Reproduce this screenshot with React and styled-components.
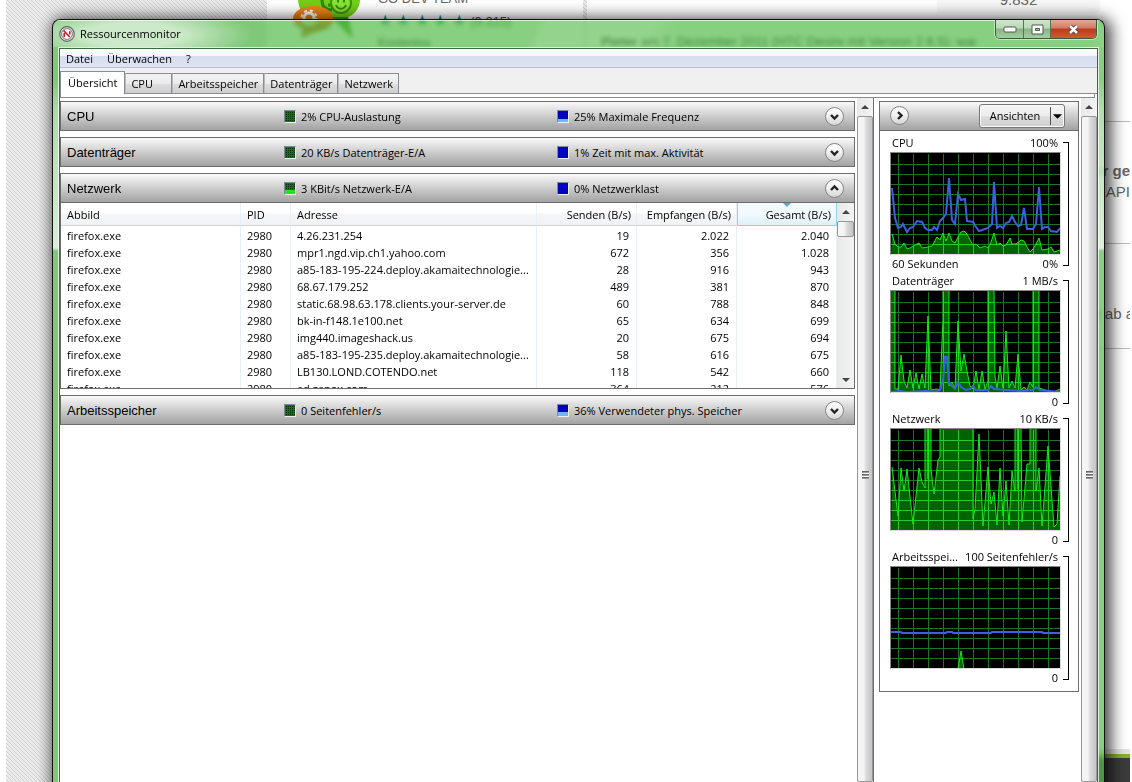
import { useState } from "react";
import styled, { createGlobalStyle } from "styled-components";

const GlobalStyle = createGlobalStyle`
  * {
    box-sizing: border-box;
  }
  body {
    margin: 0;
    background-color: #fff;
  }
  button {
    font: inherit;
    color: inherit;
    padding: 0;
    margin: 0;
  }
`;

const Desktop = styled.div`
  position: relative;
  height: 100vh;
  overflow: hidden;
  font-family: "Open Sans", "Noto Sans", sans-serif;
  font-size: 11px;
  line-height: 17px;
  color: #000;
`;

/* web page behind the window */

const WebPage = styled.div`
  display: flex;
  height: 100%;
  padding: 0 2px 0 6px;
  font-family: "Liberation Sans", Arial, sans-serif;
  font-size: 15px;
  color: #666;
  overflow: hidden;
  .hatch,
  .strip {
    background: linear-gradient(
        45deg,
        #cfcfcf 12.5%,
        #ededed 12.5% 50%,
        #cfcfcf 50% 62.5%,
        #ededed 62.5%
      )
      0 0 / 4px 4px;
  }
  .hatch {
    flex: none;
    width: 261px;
  }
  .sheet {
    flex: 1;
    min-width: 0;
    display: flex;
    flex-direction: column;
    overflow: hidden;
  }
  .top {
    flex: 1;
    display: flex;
    min-height: 0;
  }
  .strip {
    width: 4px;
    height: 250px;
  }
  .foot {
    flex: none;
    height: 28px;
    border-top: 4px solid #86b22d;
    background-color: #3c3c3c;
    outline: 5px solid #e4e4e4;
  }
`;

const AppInfo = styled.div`
  display: flex;
  gap: 18px;
  width: 316px;
  padding-left: 26px;
  svg {
    flex: none;
  }
  p {
    margin: 0;
    height: 22px;
    line-height: 22px;
    white-space: nowrap;
  }
  .dev {
    margin-top: -12px;
    font-size: 13px;
  }
  .stars {
    color: #178a8a;
    font-size: 16px;
    span {
      color: #444;
      font-size: 13px;
    }
  }
  .free {
    color: #222;
    font-size: 12px;
  }
`;

const Reviews = styled.div`
  flex: 1;
  min-width: 0;
  .count {
    width: 163px;
    height: 13px;
    margin-left: auto;
    margin-right: 30px;
    line-height: 0;
    text-align: center;
    font-size: 15px;
    background-color: #f7f7f7;
    border-radius: 0 0 4px 4px;
  }
  .author {
    height: 109px;
    margin: 0;
    padding: 20px 14px;
    border-bottom: 1px solid #bbb;
    font-size: 13px;
    color: #111;
  }
  .entry {
    height: 122px;
    padding-top: 38px;
    border-bottom: 1px solid #bbb;
    line-height: 21px;
    text-align: right;
    p {
      margin: 0;
    }
  }
  .entry.last {
    height: 105px;
    padding-top: 59px;
    margin-right: -4px;
  }
`;

/* window frame */

const Window = styled.div`
  position: absolute;
  top: 19px;
  left: 52px;
  right: 27px;
  bottom: 0;
  display: flex;
  flex-direction: column;
  border: 1px solid #111;
  border-bottom: none;
  border-radius: 8px 8px 0 0;
  padding: 0 5px;
  overflow: hidden;
  background-color: rgba(84, 188, 74, 0.7);
  backdrop-filter: blur(2px);
  background-image: linear-gradient(
    transparent 60px,
    rgba(255, 255, 255, 0.35) 90px,
    rgba(255, 255, 255, 0.7) 228px,
    transparent 231px
  );
`;

const WindowShadow = styled.div`
  position: absolute;
  top: 19px;
  left: 52px;
  right: 27px;
  bottom: -20px;
  border-radius: 8px;
  box-shadow: 3px 2px 16px 3px rgba(0, 0, 0, 0.75);
`;

const TitleBar = styled.header`
  display: flex;
  align-items: center;
  height: 27px;
  flex: none;
  margin: 0 -5px;
  padding: 0 7px 0 6px;
  box-shadow: inset 0 1px rgba(255, 255, 255, 0.7);
  background: radial-gradient(
      ellipse 120px 30px at 80px 15px,
      rgba(255, 255, 255, 0.6) 40%,
      transparent
    ),
    linear-gradient(
      115deg,
      transparent 440px,
      rgba(255, 255, 255, 0.1) 450px 540px,
      transparent 570px 950px,
      rgba(255, 255, 255, 0.3) 1010px
    );
  h1 {
    margin: 0 auto 0 5px;
    font-size: 11px;
    font-weight: 400;
  }
`;

const Caption = styled.div`
  display: flex;
  align-self: flex-start;
  height: 19px;
  border: 1px solid #3c5a3c;
  border-top: none;
  border-radius: 0 0 5px 5px;
  overflow: hidden;
  box-shadow: 0 0 0 1px rgba(255, 255, 255, 0.5);
`;

const CaptionButton = styled.button`
  display: flex;
  align-items: center;
  justify-content: center;
  width: ${({ $close }) => ($close ? 46 : 27)}px;
  border: none;
  border-left: 1px solid ${({ $first }) => ($first ? "transparent" : "#54754f")};
  background: ${({ $close }) =>
    $close
      ? "linear-gradient(#e4ab98, #d17a62 45%, #b93a1c 50%, #cf5b34)"
      : "linear-gradient(#cfe6cc, #b9d8b5 45%, #88b583 50%, #a3cf9e)"};
`;

const Client = styled.main`
  flex: 1;
  min-height: 0;
  display: flex;
  flex-direction: column;
  border: 1px solid #3d6b3b;
  border-bottom: none;
  background-color: #fff;
  box-shadow: 0 0 0 1px rgba(255, 255, 255, 0.75);
  margin: 1px 1px 0;
`;

const MenuBar = styled.nav`
  flex: none;
  display: flex;
  gap: 14px;
  height: 19px;
  padding: 0 6px;
  border-bottom: 1px solid #b4c0d8;
  background: linear-gradient(#fff, #f4f6fb 38%, #d5dcef 42%, #dfe5f4);
  button {
    border: none;
    background: none;
  }
`;

const TabBar = styled.div`
  flex: none;
  display: flex;
  align-items: flex-end;
  height: 26px;
  border-bottom: 1px solid #898c95;
  background-color: #f0f0f0;
`;

const Tab = styled.button`
  height: ${({ $active }) => ($active ? 23 : 20)}px;
  min-width: 47px;
  margin-bottom: ${({ $active }) => ($active ? -1 : 0)}px;
  padding: ${({ $active }) => ($active ? "0 7px 2px" : "0 5px")};
  text-align: left;
  border: 1px solid #898c95;
  border-bottom: none;
  border-left-color: ${({ $active }) => ($active ? "#898c95" : "#b8bac0")};
  background: ${({ $active }) =>
    $active ? "#fff" : "linear-gradient(#f3f3f3, #ebebeb 50%, #dcdcdc 54%, #cfcfcf)"};
`;

const TabEdge = styled.div`
  flex: none;
  height: 4px;
  margin-right: 2px;
  border: 1px solid #898c95;
  border-top: none;
`;

const Body = styled.div`
  flex: 1;
  min-height: 0;
  display: flex;
`;

const Sections = styled.div`
  flex: 1;
  min-width: 0;
  display: flex;
  flex-direction: column;
  gap: 6px;
  padding: 3px 2px 0 0;
`;

const Section = styled.section`
  flex: none;
  border: 1px solid #6d6d6d;
`;

const SectionHeader = styled.header`
  display: grid;
  grid-template-columns: 217px 273fr 268fr 19px;
  align-items: center;
  height: 28px;
  padding: 0 10px 0 6px;
  background: linear-gradient(#fafafa, #e3e3e3 25%, #a2a2a2);
  box-shadow: ${({ $open }) => ($open ? "0 1px #6d6d6d" : "none")};
  h2 {
    margin: 0;
    font-family: "Liberation Sans", Arial, sans-serif;
    font-size: 13px;
    font-weight: 400;
  }
`;

const Stat = styled.span`
  display: flex;
  align-items: center;
  gap: 5px;
  white-space: nowrap;
`;

const Meter = styled.i`
  flex: none;
  width: 12px;
  height: 13px;
  border: 1px solid #7c8c9c;
  border-right-color: #eee;
  border-bottom-color: #eee;
  background: ${({ $blue, $level }) => {
    const low = $blue ? "#6fb4fa" : "#1fe51f";
    const base = $blue ? "#0404c4" : "#0a780a";
    const dot = $blue ? "#00007c" : "#003000";
    return `linear-gradient(transparent ${100 - $level}%, ${low} ${100 - $level}%),
      repeating-linear-gradient(90deg, ${base} 0 1px, transparent 1px 2px),
      repeating-linear-gradient(${base} 0 1px, ${dot} 1px 2px)`;
  }};
`;

const RoundButton = styled.button`
  display: flex;
  align-items: center;
  justify-content: center;
  width: 19px;
  height: 19px;
  border: 1px solid #858585;
  border-radius: 50%;
  background: linear-gradient(#fff, #f0f0f0 50%, #d6d6d6);
`;

const TableArea = styled.div`
  display: flex;
  height: 186px;
  padding-top: 1px;
  overflow: hidden;
  .rows {
    flex: 1;
    min-width: 0;
    background: linear-gradient(#fff 10px, #f4f6f8 11px, #f0f2f5 22px, #fff 22px);
  }
`;

const Table = styled.table`
  width: 100%;
  table-layout: fixed;
  border-collapse: separate;
  border-spacing: 0;
  th,
  td {
    padding: 0 6px;
    border-right: 1px solid #e8eff6;
    text-align: left;
    font-weight: 400;
    white-space: nowrap;
    overflow: hidden;
  }
  th {
    height: 23px;
    border-bottom: 1px solid #d2d4d6;
  }
  th.num,
  td.num {
    text-align: right;
    padding-left: 0;
  }
  td.num {
    padding-right: 7px;
  }
  th.num {
    padding-right: 5px;
  }
  td {
    height: 17px;
  }
  tbody tr:first-child td {
    height: 18px;
    padding-top: 1px;
  }
  th.sorted {
    position: relative;
    border: 1px solid #96d1ea;
    border-top: none;
    background: linear-gradient(#f3fafd 50%, #dcf0f8);
    &::before {
      content: "";
      position: absolute;
      top: 0;
      left: 50%;
      margin-left: -4px;
      border: 4px solid transparent;
      border-top-color: #5fa8c8;
      border-bottom: none;
    }
  }
`;

const Bar = styled.div`
  flex: none;
  display: flex;
  flex-direction: column;
  align-items: center;
  width: ${({ $wide }) => ($wide ? 17 : 16)}px;
  background: linear-gradient(90deg, #e8e8e8, #f4f4f4);
  svg {
    flex: none;
  }
  .track {
    flex: 1;
  }
`;

const Thumb = styled.div`
  width: 100%;
  height: ${({ $size }) => $size};
  display: flex;
  align-items: center;
  justify-content: center;
  border: 1px solid #979797;
  border-radius: 2px;
  background: linear-gradient(90deg, #f5f5f5 40%, #dadadc 60%, #c4c4c8);
`;

const Grip = styled.div`
  width: 7px;
  height: 8px;
  margin-top: 52px;
  background: repeating-linear-gradient(#666 0 1px, #999 1px 2px, #fff 2px 3px);
`;

const Side = styled.aside`
  flex: none;
  display: flex;
  gap: 2px;
  width: 224px;
  padding-left: 5px;
  border-left: 1px solid #6d6d6d;
`;

const GraphPanel = styled.div`
  flex: 1;
  min-width: 0;
  align-self: flex-start;
  height: 591px;
  margin-top: 3px;
  border: 1px solid #6d6d6d;
  > header {
    display: flex;
    align-items: center;
    justify-content: space-between;
    height: 29px;
    margin-bottom: 3px;
    padding: 0 13px 1px 10px;
    border-bottom: 1px solid #6d6d6d;
    background: linear-gradient(#fafafa, #e3e3e3 25%, #a2a2a2);
  }
`;

const Views = styled.button`
  display: flex;
  align-items: center;
  width: 86px;
  height: 24px;
  border: 1px solid #777;
  border-radius: 3px;
  background: linear-gradient(#f4f4f4, #ececec 50%, #dcdcdc 53%, #cfcfcf);
  box-shadow: inset 0 0 0 1px #fafafa;
  span {
    flex: 1;
  }
  svg {
    height: 18px;
    border-left: 1px solid #555;
  }
`;

const GraphBox = styled.figure`
  display: flex;
  height: 138px;
  margin: 0;
  padding: 0 9px 0 10px;
  .plot {
    flex: 1;
    min-width: 0;
  }
  .row {
    display: flex;
    justify-content: space-between;
    height: 17px;
    padding: 0 3px 0 2px;
    white-space: nowrap;
  }
  .row.top {
    height: 18px;
  }
  svg {
    display: block;
    width: 171px;
    height: 103px;
    border: 1px solid #888;
    border-right-color: #ddd;
    border-bottom-color: #ddd;
    background-color: #000;
  }
  .bracket {
    width: 6px;
    height: 124px;
    margin: 8px 0 0 2px;
    border: 1px solid #000;
    border-left: none;
  }
`;

const sections = [
  { title: "CPU", left: ["2% CPU-Auslastung", 0], right: ["25% Maximale Frequenz", 30] },
  { title: "Datenträger", left: ["20 KB/s Datenträger-E/A", 0], right: ["1% Zeit mit max. Aktivität", 0] },
  { title: "Netzwerk", left: ["3 KBit/s Netzwerk-E/A", 40], right: ["0% Netzwerklast", 0], open: true },
  { title: "Arbeitsspeicher", left: ["0 Seitenfehler/s", 0], right: ["36% Verwendeter phys. Speicher", 40] },
];

const connections = [
  ["4.26.231.254", "19", "2.022", "2.040"],
  ["mpr1.ngd.vip.ch1.yahoo.com", "672", "356", "1.028"],
  ["a85-183-195-224.deploy.akamaitechnologie...", "28", "916", "943"],
  ["68.67.179.252", "489", "381", "870"],
  ["static.68.98.63.178.clients.your-server.de", "60", "788", "848"],
  ["bk-in-f148.1e100.net", "65", "634", "699"],
  ["img440.imageshack.us", "20", "675", "694"],
  ["a85-183-195-235.deploy.akamaitechnologie...", "58", "616", "675"],
  ["LB130.LOND.COTENDO.net", "118", "542", "660"],
  ["ad.zanox.com", "364", "212", "576"],
];

const graphs = [
  {
    name: "CPU",
    max: "100%",
    span: "60 Sekunden",
    min: "0%",
    area: "1,81 4,91 7,94 10,94 13,90 16,96 19,95 22,93 28,90 31,95 37,94 41,93 46,84 49,87 52,80 55,88 58,80 61,88 64,90 67,84 70,79 73,78 76,81 79,87 82,92 85,91 89,95 94,93 97,95 100,89 103,80 106,92 109,90 112,93 115,92 119,85 121,91 125,91 130,87 133,88 136,94 139,99 142,96 145,91 148,85 151,97 157,96 160,94 163,99 169,97",
    line: "1,35 4,65 7,75 10,74 12,71 16,79 19,75 22,74 26,68 31,69 34,75 37,77 41,77 43,74 46,77 49,68 52,65 55,61 58,25 61,67 64,71 67,41 70,47 74,46 76,68 82,69 85,74 88,78 94,76 97,75 101,71 103,29 106,75 109,73 112,75 115,70 118,69 121,63 124,69 127,73 130,72 133,55 136,76 142,76 145,71 148,34 151,76 154,74 157,74 160,78 166,79 169,75",
  },
  {
    name: "Datenträger",
    max: "1 MB/s",
    min: "0",
    area: "0,-2 4,-2 4,98 7,98 10,64 13,90 16,97 19,79 22,97 25,82 28,98 31,83 34,97 37,25 40,99 46,98 49,99 52,28 52,-2 58,-2 58,95 61,91 64,97 67,30 70,80 73,63 76,80 79,95 82,98 85,80 88,98 91,80 94,98 97,90 97,-2 103,-2 104,85 106,97 109,75 112,97 115,40 118,97 121,90 124,97 127,63 130,99 133,96 136,99 139,91 142,96 142,-2 148,-2 148,97 154,99 163,101 169,98",
    line: "0,101 10,100 15,101 36,100 44,101 49,99 52,90 54,66 56,66 58,92 62,96 64,98 67,91 70,96 75,99 79,98 82,95 85,99 97,99 100,95 103,98 130,100 142,99 145,96 149,99 169,101",
  },
  {
    name: "Netzwerk",
    max: "10 KB/s",
    min: "0",
    area: "1,38 7,87 10,39 13,62 16,40 22,95 28,39 31,53 34,59 34,-2 37,-2 37,50 37,-2 40,-2 40,40 43,65 47,31 49,28 49,-2 82,-2 82,90 84,80 88,5 92,97 97,38 100,75 103,63 106,96 109,39 112,87 115,52 118,96 121,42 124,62 124,-2 127,-2 127,60 127,-2 130,-2 131,93 136,35 139,35 139,-2 145,-2 145,62 148,39 151,97 157,17 163,98 166,95 169,47",
  },
  {
    name: "Arbeitsspei...",
    max: "100 Seitenfehler/s",
    min: "0",
    area: "0,102 67,102 70,84 73,102 169,102",
    line: "0,65 10,65 11,66 55,66 56,65 61,65 62,66 100,66 101,65 151,65 152,66 169,66",
  },
];

const gridPath = [
  ...Array.from({ length: 11 }, (_, i) => `M${7 + i * 15} 0v1h1v100h-1z`),
  ...Array.from({ length: 9 }, (_, i) => `M0 ${11 + i * 10}h169v1h-169z`),
].join("");

const Chevron = ({ turn = 0 }) => (
  <svg width="11" height="11" viewBox="0 0 11 11">
    <path
      d="M2 4l3.5 3.5L9 4"
      transform={`rotate(${turn} 5.5 5.5)`}
      fill="none"
      stroke="#222"
      strokeWidth="2.4"
    />
  </svg>
);

const Arrow = ({ down }) => (
  <svg width="16" height="18" viewBox="0 0 16 18">
    <path d={down ? "M4 8h8l-4 4z" : "M4 11h8l-4-4z"} fill="#444" />
  </svg>
);

const Gauge = () => (
  <svg width="16" height="16" viewBox="0 0 16 16">
    <circle cx="8" cy="8" r="7.3" fill="#e4e4e4" stroke="#666" strokeWidth="1.2" />
    <circle cx="8" cy="8" r="5.4" fill="#fff" stroke="#777" strokeWidth="1" />
    <path d="M5.2 11V7M4.6 4.6l6.2 6.4M10.8 8.5V5.2" stroke="#c4202c" strokeWidth="1.6" fill="none" />
  </svg>
);

const AppLogo = () => (
  <svg width="67" height="42" viewBox="0 0 67 42">
    <path d="M5 0h62c0 6-4 14-12 17l4 21-17-17H24C11 20 6 10 5 0z" fill="#74cf16" />
    <path d="M38 17h17l5 21z" fill="#3c9d10" />
    <path d="M29 0c0 7 4 10 10 10M40 0v5h-5" fill="none" stroke="#2f8a0d" strokeWidth="3" />
    <circle cx="48" cy="3" r="10" fill="#8be32f" stroke="#379310" strokeWidth="2" />
    <path d="M43 5c2 5 8 5 10 0" fill="none" stroke="#2f8a0d" strokeWidth="2" />
    <path d="M44 1h2M50 1h2" stroke="#2f8a0d" strokeWidth="3" />
    <path d="M20 6c12 0 20 5 20 13S32 31 22 32l-14 6 2-9C2 26 0 22 0 18 1 11 9 6 20 6z" fill="#ee8415" />
    <path d="M1 20c8 5 28 5 38 0-1 6-8 11-17 12l-14 6 2-9c-5-2-8-5-9-9z" fill="#b95c10" />
    <circle cx="16" cy="18" r="5" fill="none" stroke="#fff" strokeWidth="3" />
    <circle cx="16" cy="18" r="7.5" fill="none" stroke="#fff" strokeWidth="2" strokeDasharray="3 3" />
  </svg>
);

const Graph = ({ graph, id }) => {
  const shape = `0,102 ${graph.area} 169,102`;

  return (
    <GraphBox>
      <div className="plot">
        <div className="row top">
          <span>{graph.name}</span>
          <span>{graph.max}</span>
        </div>
        <svg viewBox="0 0 169 101" role="img" aria-label={graph.name}>
          <clipPath id={id}>
            <polygon points={shape} />
          </clipPath>
          <path d={gridPath} fill="#1c7428" />
          <polygon points={shape} fill="#006400" />
          <path d={gridPath} fill="#2cc62c" clipPath={`url(#${id})`} />
          <polyline points={graph.area} fill="none" stroke="#1ce81c" />
          {graph.line && (
            <polyline points={graph.line} fill="none" stroke="#3a62e0" strokeWidth="2" />
          )}
        </svg>
        <div className="row">
          <span>{graph.span}</span>
          <span>{graph.min}</span>
        </div>
      </div>
      <div className="bracket" />
    </GraphBox>
  );
};

const Connections = () => (
  <TableArea>
    <div className="rows">
      <Table>
        <colgroup>
          <col width="180" />
          <col width="50" />
          <col />
          <col width="100" />
          <col width="100" />
          <col width="100" />
        </colgroup>
        <thead>
          <tr>
            <th>Abbild</th>
            <th>PID</th>
            <th>Adresse</th>
            <th className="num">Senden (B/s)</th>
            <th className="num">Empfangen (B/s)</th>
            <th className="num sorted">Gesamt (B/s)</th>
          </tr>
        </thead>
        <tbody>
          {connections.map(([address, sent, received, total], i) => (
            <tr key={i}>
              <td>firefox.exe</td>
              <td>2980</td>
              <td>{address}</td>
              <td className="num">{sent}</td>
              <td className="num">{received}</td>
              <td className="num">{total}</td>
            </tr>
          ))}
        </tbody>
      </Table>
    </div>
    <Bar $wide>
      <Arrow />
      <Thumb $size="16px" />
      <div className="track" />
      <Arrow down />
    </Bar>
  </TableArea>
);

const tabs = ["Übersicht", "CPU", "Arbeitsspeicher", "Datenträger", "Netzwerk"];

const App = () => {
  const [tab, setTab] = useState("Übersicht");

  return (
    <Desktop>
      <GlobalStyle />
      <WebPage>
        <div className="hatch" />
        <div className="sheet">
          <div className="top">
            <AppInfo>
              <AppLogo />
              <div>
                <p className="dev">GO DEV TEAM</p>
                <p className="stars">
                  ★ ★ ★ ★ ★ <span>(9.315)</span>
                </p>
                <p className="free">Kostenlos</p>
              </div>
            </AppInfo>
            <div className="strip" />
            <Reviews>
              <div className="count">9.832</div>
              <p className="author">
                <b>Pieter</b> am 7. Dezember 2011 (HTC Desire mit Version 2.6.5): war
              </p>
              <div className="entry">
                <p>
                  <b>er ge</b>
                </p>
                <p>API</p>
              </div>
              <div className="entry last">
                <p>t ab a</p>
              </div>
            </Reviews>
          </div>
          <div className="foot" />
        </div>
      </WebPage>
      <WindowShadow />
      <Window>
        <TitleBar>
          <Gauge />
          <h1>Ressourcenmonitor</h1>
          <Caption>
            <CaptionButton $first aria-label="Minimieren">
              <svg width="14" height="7" viewBox="0 0 14 7">
                <rect x="1" y="1" width="12" height="5" rx="1" fill="#fff" stroke="#555" />
              </svg>
            </CaptionButton>
            <CaptionButton aria-label="Maximieren">
              <svg width="13" height="11" viewBox="0 0 13 11">
                <path d="M1 1h11v9H1z" fill="#fff" stroke="#555" />
                <path d="M4.5 4.5h4v2h-4z" fill="#9c9" stroke="#555" />
              </svg>
            </CaptionButton>
            <CaptionButton $close aria-label="Schließen">
              <svg width="13" height="11" viewBox="0 0 13 11">
                <path d="M3 2l7 7M10 2L3 9" stroke="#544" strokeWidth="4.5" />
                <path d="M3 2l7 7M10 2L3 9" stroke="#fff" strokeWidth="2.5" />
              </svg>
            </CaptionButton>
          </Caption>
        </TitleBar>
        <Client>
          <MenuBar>
            <button>Datei</button>
            <button>Überwachen</button>
            <button>?</button>
          </MenuBar>
          <TabBar>
            {tabs.map((e) => (
              <Tab key={e} $active={e === tab} onClick={() => setTab(e)}>
                {e}
              </Tab>
            ))}
          </TabBar>
          <TabEdge />
          <Body>
            <Sections>
              {sections.map((e) => (
                <Section key={e.title}>
                  <SectionHeader $open={e.open}>
                    <h2>{e.title}</h2>
                    <Stat>
                      <Meter $level={e.left[1]} />
                      {e.left[0]}
                    </Stat>
                    <Stat>
                      <Meter $blue $level={e.right[1]} />
                      {e.right[0]}
                    </Stat>
                    <RoundButton aria-label={e.title}>
                      <Chevron turn={e.open ? 180 : 0} />
                    </RoundButton>
                  </SectionHeader>
                  {e.open && <Connections />}
                </Section>
              ))}
            </Sections>
            <Bar>
              <Arrow />
              <Thumb $size="100%">
                <Grip />
              </Thumb>
            </Bar>
            <Side>
              <GraphPanel>
                <header>
                  <RoundButton aria-label="Ausblenden">
                    <Chevron turn={-90} />
                  </RoundButton>
                  <Views>
                    <span>Ansichten</span>
                    <svg width="14" viewBox="0 0 14 18">
                      <path d="M2 7h10l-5 5z" />
                    </svg>
                  </Views>
                </header>
                {graphs.map((e, i) => (
                  <Graph key={e.name} graph={e} id={`area${i}`} />
                ))}
              </GraphPanel>
              <Bar>
                <Arrow />
                <Thumb $size="100%">
                  <Grip />
                </Thumb>
              </Bar>
            </Side>
          </Body>
        </Client>
      </Window>
    </Desktop>
  );
};

export default App;
